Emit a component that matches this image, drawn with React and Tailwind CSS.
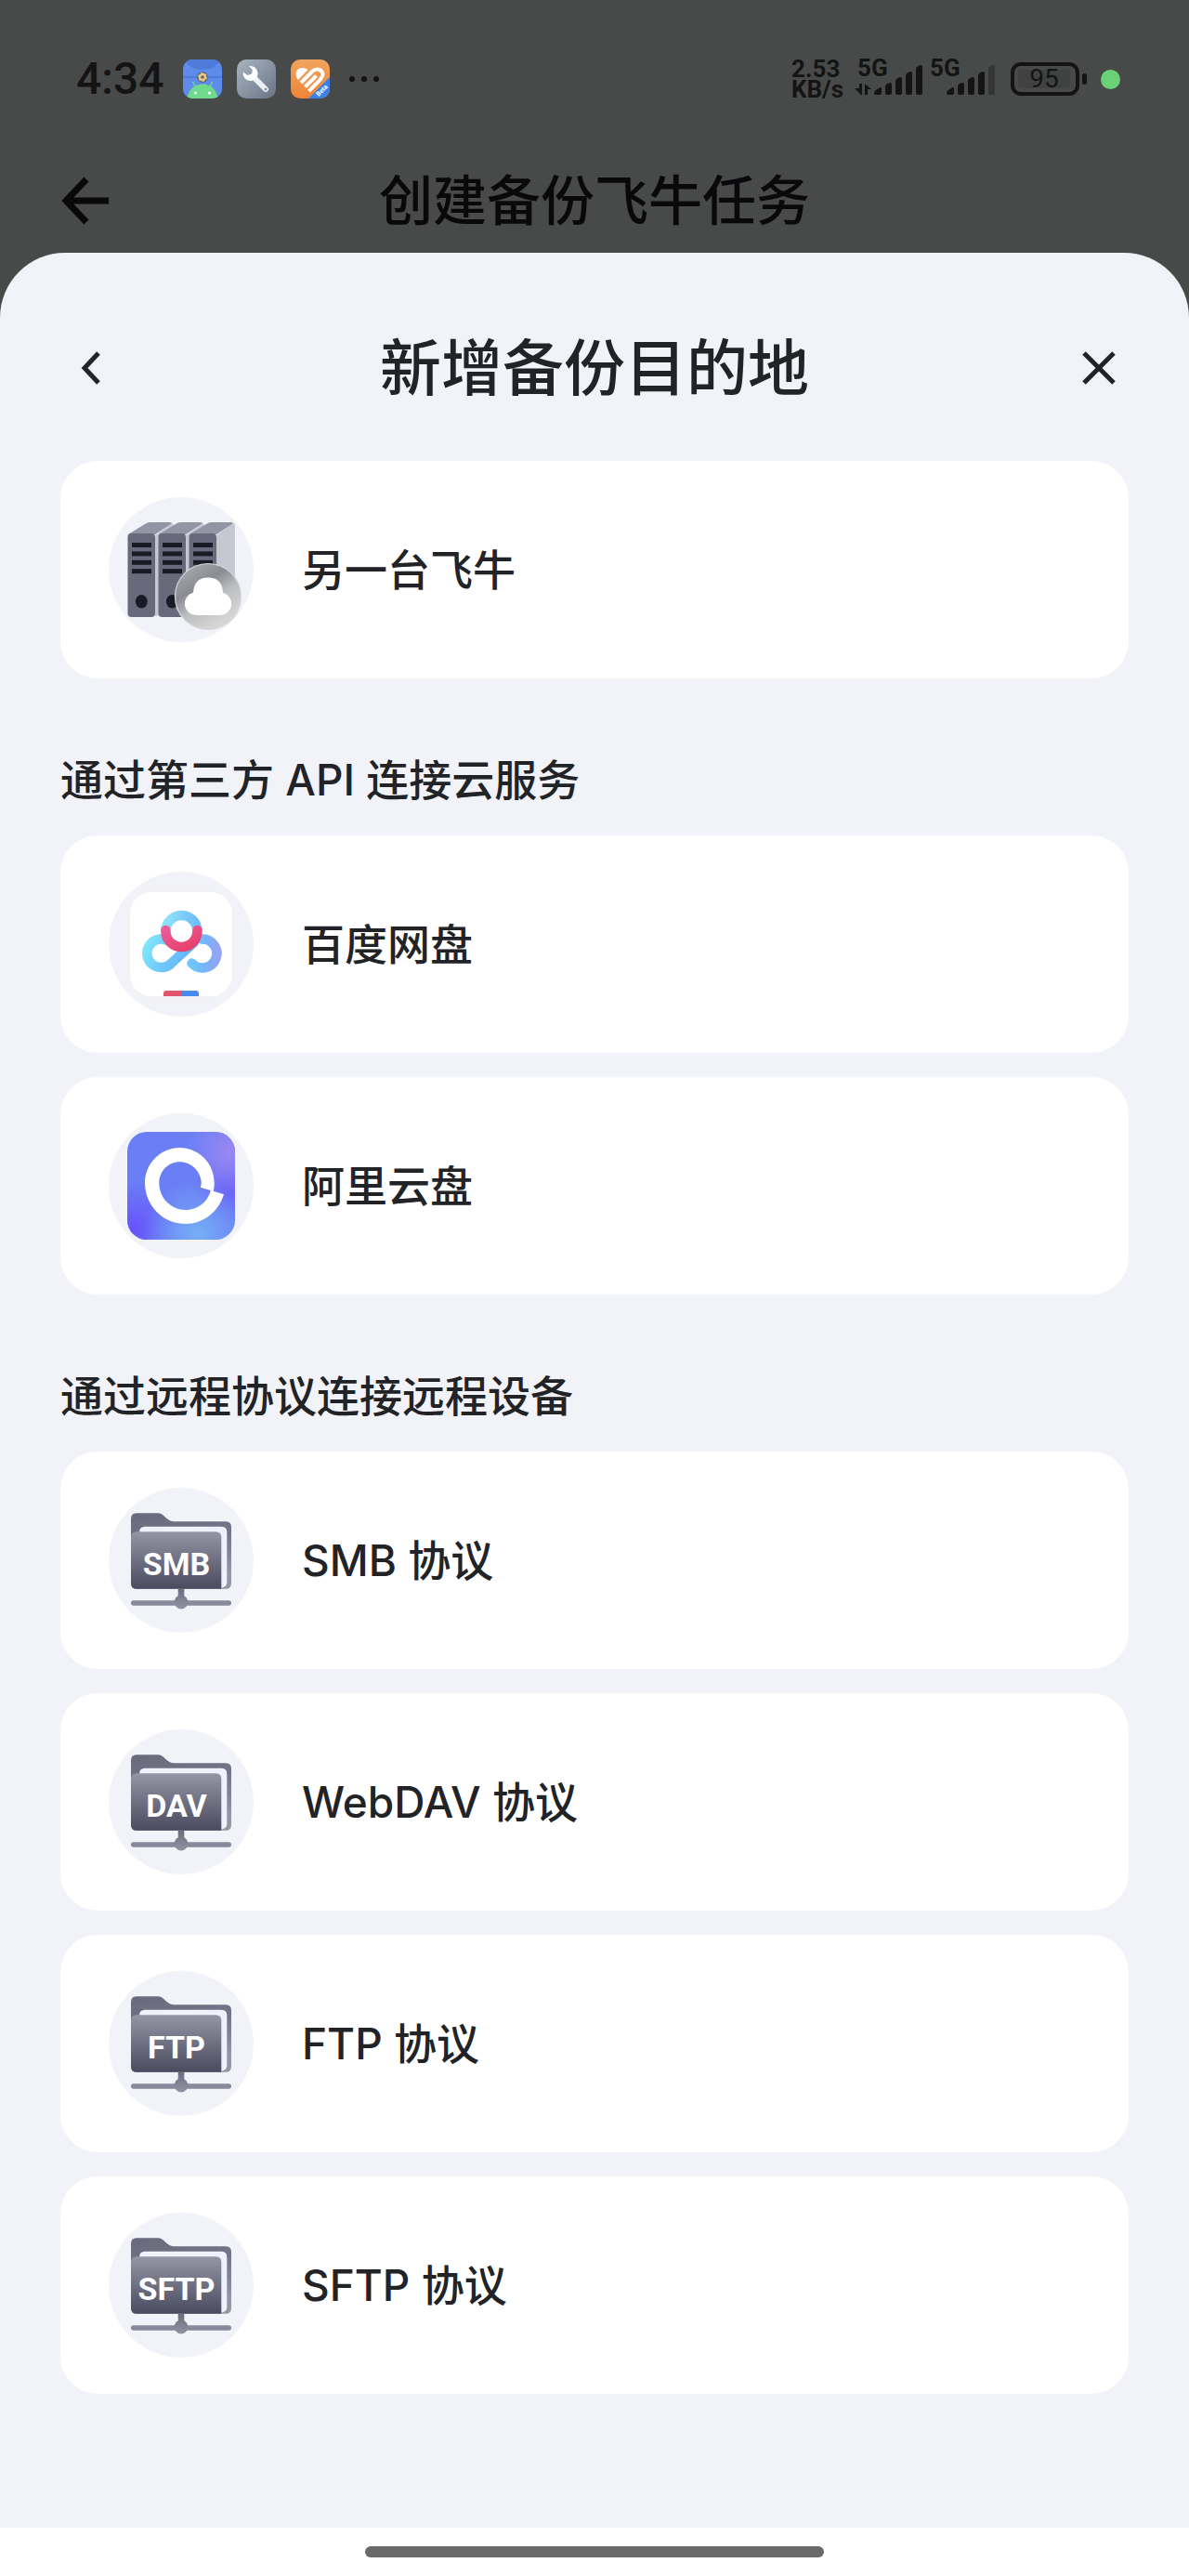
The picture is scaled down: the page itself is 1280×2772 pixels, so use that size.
import { useState } from "react";

const CLOUD_SERVICES = [
  { id: "baidu", name: "百度网盘", icon: <BaiduIcon /> },
  { id: "aliyun", name: "阿里云盘", icon: <AliyunIcon /> },
];

const PROTOCOLS = [
  { id: "smb", name: "SMB 协议", icon: <FolderIcon tag="SMB" /> },
  { id: "webdav", name: "WebDAV 协议", icon: <FolderIcon tag="DAV" /> },
  { id: "ftp", name: "FTP 协议", icon: <FolderIcon tag="FTP" /> },
  { id: "sftp", name: "SFTP 协议", icon: <FolderIcon tag="SFTP" /> },
];

// ── Destination icons, all drawn on the same 156px disc ──

function ServerIcon() {
  return (
    <svg width="156" height="156" viewBox="0 0 156 156" aria-hidden="true">
      <defs>
        <linearGradient id="badge" x1="0.2" y1="0.1" x2="0.7" y2="0.9">
          <stop offset="0" stopColor="#a2a3a9" />
          <stop offset="0.3" stopColor="#8b8c93" />
          <stop offset="0.6" stopColor="#bcbdbf" />
          <stop offset="1" stopColor="#d6d6d6" />
        </linearGradient>
      </defs>
      {[0, 33, 66].map((x) => (
        <g key={x} transform={`translate(${x} 0)`}>
          <path d="M50 41 67 29q3-2 3 2v90q0 3-3 4l-17 3z" fill="#c5c8d0" />
          <path d="M21 40 39 29q3-2 5-2h22q3 0 1 2L50 40z" fill="#9195a4" />
          <rect x="20.5" y="39" width="29.5" height="90" rx="4" fill="#686a7c" />
          {[49, 58.4, 67.8, 77.2].map((y) => (
            <rect key={y} x="25" y={y} width="21" height="5" fill="#191a26" />
          ))}
          <ellipse cx="35.3" cy="112.3" rx="6.4" ry="7.3" fill="#191a26" />
        </g>
      ))}
      <circle cx="107" cy="107" r="35.5" fill="url(#badge)" stroke="#d9dadd" strokeWidth="1.2" />
      <path d="M94 127a12.3 12.3 0 0 1-3-24.2q1-16.2 16-16.2t16 16.2a12.3 12.3 0 0 1-3 24.2z" fill="#fff" />
    </svg>
  );
}

function BaiduIcon() {
  return (
    <svg width="156" height="156" viewBox="0 0 156 156" aria-hidden="true">
      <defs>
        <linearGradient id="bd-top" x1="0" y1="0" x2="1" y2="0">
          <stop offset="0" stopColor="#8ce3f9" />
          <stop offset="1" stopColor="#6fbdfa" />
        </linearGradient>
        <linearGradient id="bd-left" gradientUnits="userSpaceOnUse" x1="36" y1="72" x2="90" y2="96">
          <stop offset="0" stopColor="#83ecf8" />
          <stop offset="0.5" stopColor="#70c9fb" />
          <stop offset="1" stopColor="#62b0f8" />
        </linearGradient>
        <linearGradient id="bd-right" gradientUnits="userSpaceOnUse" x1="84" y1="86" x2="120" y2="86">
          <stop offset="0" stopColor="#70cbfb" />
          <stop offset="0.5" stopColor="#74b6fa" />
          <stop offset="1" stopColor="#95a2f3" />
        </linearGradient>
        <linearGradient id="bd-red" x1="0" y1="0" x2="1" y2="1">
          <stop offset="0" stopColor="#ea5b98" />
          <stop offset="1" stopColor="#e83e68" />
        </linearGradient>
      </defs>
      <rect x="22" y="21" width="112" height="114" rx="24" fill="#fff" stroke="#f0f0f1" strokeWidth="1.5" />
      <g fill="none" strokeWidth="10.5" strokeLinecap="round">
        <path d="M89.500 98.500A15.500 15.500 0 1 0 100 72.500" stroke="url(#bd-right)" />
        <path d="M92 76 67.500 98.500A15.300 15.300 0 1 1 62 73.500" stroke="url(#bd-left)" />
        <path d="M61.400 64a17 17 0 0 1 34 0" stroke="url(#bd-top)" strokeLinecap="butt" />
        <path d="M61.400 63v1a17 17 0 0 0 34 0v-1" stroke="url(#bd-red)" />
      </g>
      <path d="M59 134v-3q0-3 3-3h16v6z" fill="#e4546f" />
      <path d="M78 134v-6h16q3 0 3 3v3z" fill="#478bf0" />
    </svg>
  );
}

function AliyunIcon() {
  return (
    <svg width="156" height="156" viewBox="0 0 156 156" aria-hidden="true">
      <defs>
        <radialGradient id="ali-pink" cx="0.95" cy="0.18" r="0.4">
          <stop offset="0" stopColor="#9b86f2" />
          <stop offset="1" stopColor="#9b86f2" stopOpacity="0" />
        </radialGradient>
        <radialGradient id="ali-sky" cx="0.65" cy="0.95" r="0.5">
          <stop offset="0" stopColor="#75aef6" />
          <stop offset="1" stopColor="#75aef6" stopOpacity="0" />
        </radialGradient>
        <radialGradient id="ali-violet" cx="0.05" cy="0.9" r="0.45">
          <stop offset="0" stopColor="#6853fa" />
          <stop offset="1" stopColor="#6853fa" stopOpacity="0" />
        </radialGradient>
        <radialGradient id="ali-indigo" cx="0.95" cy="0.55" r="0.35">
          <stop offset="0" stopColor="#6a62f6" />
          <stop offset="1" stopColor="#6a62f6" stopOpacity="0" />
        </radialGradient>
      </defs>
      <rect x="20" y="20" width="116" height="116" rx="21" fill="#6a7ff5" />
      <rect x="20" y="20" width="116" height="116" rx="21" fill="url(#ali-indigo)" />
      <rect x="20" y="20" width="116" height="116" rx="21" fill="url(#ali-pink)" />
      <rect x="20" y="20" width="116" height="116" rx="21" fill="url(#ali-violet)" />
      <rect x="20" y="20" width="116" height="116" rx="21" fill="url(#ali-sky)" />
      <path
        fillRule="evenodd"
        fill="#fff"
        d="M112.7 83.7 124 87.3C118 107 101 119 83 119 58 119 39 99 39 75 39 54 56 37 76.5 37 97 37 113.7 54 113.7 75c0 4-.3 6-1 8.700zM98.7 79.7 109.7 83C107 95 96 104 83 104 67 104 54.3 91 54.3 75c0-12.5 9.700-22.7 22.2-22.7S99.7 63 99.7 75c0 2-.4 3-1 4.700z"
      />
    </svg>
  );
}

function FolderIcon({ tag }) {
  return (
    <svg width="156" height="156" viewBox="0 0 156 156" aria-hidden="true">
      <defs>
        <linearGradient id={`back-${tag}`} x1="0" y1="0" x2="0.3" y2="1">
          <stop offset="0" stopColor="#686a7c" />
          <stop offset="0.5" stopColor="#747689" />
          <stop offset="1" stopColor="#9496a6" />
        </linearGradient>
        <linearGradient id={`front-${tag}`} x1="0" y1="0" x2="0" y2="1">
          <stop offset="0" stopColor="#9395a4" />
          <stop offset="1" stopColor="#4a4b5f" />
        </linearGradient>
        <linearGradient id={`stem-${tag}`} gradientUnits="userSpaceOnUse" x1="0" y1="108" x2="0" y2="131">
          <stop offset="0" stopColor="#6a6b7e" />
          <stop offset="1" stopColor="#9293a3" />
        </linearGradient>
      </defs>
      <path d="M30 27.3h23c3 0 4.500 1 6.500 3l3 2.800c3 2.400 5 3.200 8 3.200H126q6 0 6 6v60.4q0 6-6 6H30q-6 0-6-6V33.3q0-6 6-6z" fill={`url(#back-${tag})`} />
      <path d="M33 48q0-6.300 6-6.300h82.3q6 0 6 6V102q0 4-5 5.500H33z" fill="#eff1fd" />
      <path d="M30 47.3h85.3q6 0 6 6V108.7H30q-6 0-6-6V53.3q0-6 6-6z" fill={`url(#front-${tag})`} />
      <rect x="24" y="121.3" width="108" height="5.4" rx="2.7" fill="#88899a" />
      <path d="M74.7 108.7h6.600v7.500a7.500 7.500 0 1 1-6.600 0z" fill={`url(#stem-${tag})`} />
      <text x="73" y="94" textAnchor="middle" fill="#fff" className="font-['Roboto',sans-serif] text-[34px] font-bold">
        {tag}
      </text>
    </svg>
  );
}

// ── Status bar drawings ──

function ToolboxAppIcon() {
  return (
    <svg width="42" height="42" viewBox="0 0 42 42" aria-hidden="true">
      <defs>
        <clipPath id="app-clip">
          <rect width="42" height="42" rx="10" />
        </clipPath>
      </defs>
      <g clipPath="url(#app-clip)">
        <rect width="42" height="42" fill="#5d8cec" />
        <ellipse cx="21" cy="0" rx="18" ry="11" fill="#4f7cd8" />
        <path d="M0 19h42" stroke="#4f7cd8" strokeWidth="2" />
        <circle cx="21" cy="19" r="6" fill="#53698f" />
        <circle cx="21" cy="19" r="3" fill="none" stroke="#edc877" strokeWidth="2.4" />
        <circle cx="21" cy="19" r="4.2" fill="none" stroke="#edc877" strokeWidth="1.4" strokeDasharray="2.2" />
        <path d="m10.500 24 3 6M31.500 24l-3 6" stroke="#6fda8c" strokeWidth="1.5" />
        <path d="M4.500 43a16.500 16.500 0 0 1 33 0z" fill="#6fda8c" />
        <circle cx="13.5" cy="36" r="1.6" fill="#fff" />
        <circle cx="28.5" cy="36" r="1.6" fill="#fff" />
      </g>
    </svg>
  );
}

function WrenchAppIcon() {
  return (
    <svg width="42" height="42" viewBox="0 0 42 42" aria-hidden="true">
      <defs>
        <linearGradient id="wrench-bg" x1="0" y1="0" x2="1" y2="1">
          <stop offset="0" stopColor="#a9b4c1" />
          <stop offset="1" stopColor="#687484" />
        </linearGradient>
      </defs>
      <rect width="42" height="42" rx="10" fill="url(#wrench-bg)" />
      <path d="m17 18 14 14" stroke="#eceff3" strokeWidth="6" strokeLinecap="round" />
      <path d="M13 7.200a8 8 0 1 1-6.200 6.300l4.700 3.500 4.700-1.400.5-4.700z" fill="#fff" />
      <circle cx="31" cy="32" r="1.5" fill="#8793a1" />
    </svg>
  );
}

function HealthAppIcon() {
  return (
    <svg width="42" height="42" viewBox="0 0 42 42" aria-hidden="true">
      <defs>
        <linearGradient id="health-bg" x1="0" y1="0" x2="0" y2="1">
          <stop offset="0" stopColor="#f1a45e" />
          <stop offset="1" stopColor="#ee8536" />
        </linearGradient>
        <clipPath id="health-clip">
          <rect width="42" height="42" rx="10" />
        </clipPath>
      </defs>
      <g clipPath="url(#health-clip)">
        <rect width="42" height="42" fill="url(#health-bg)" />
        <path d="M8 22C3 16 6 9 12.500 9q3 0 6 2z" fill="#fff" />
        <path d="M11 25 23.500 12.500C28 8.500 34 11 34.500 15.500c.3 3.500-2 5.500-15 18.500M15.500 29.500l12-12" fill="none" stroke="#fff" strokeWidth="4" />
        <path d="M42 19v23H19z" fill="#3a80ea" />
        <text transform="translate(30 40) rotate(-45)" fill="#fff" className="font-['Roboto',sans-serif] text-[7px] font-bold">
          Beta
        </text>
      </g>
    </svg>
  );
}

function Signal({ data, faded }) {
  return (
    <svg className="overflow-visible" width="76" height="42" viewBox="0 0 76 42" fill="#141414" aria-hidden="true">
      <text x="3" y="18" className="font-['Roboto',sans-serif] text-[26px] font-bold">
        5G
      </text>
      {data && <path d="M5 26h3v12H7L0 31h5zM11 26l7 6h-4v6h-3z" />}
      <path d="M21 36q0-2 4-4.500t4-.5v5q0 2-2 2h-4q-2 0-2-2zM33 29q0-2 3.500-3.500T40 27v9q0 2-2 2h-3q-2 0-2-2zM44 23q0-2 3.500-3.500T51 21v15q0 2-2 2h-3q-2 0-2-2zM55 17q0-2 3.500-3.500T62 15v21q0 2-2 2h-3q-2 0-2-2z" />
      <path d="M66 10q0-2 3.500-3.500T73 8v28q0 2-2 2h-3q-2 0-2-2z" fill={faded ? "#353636" : "#141414"} />
    </svg>
  );
}

function StatusBar() {
  return (
    <div className="flex h-40 items-center pt-[10px] pr-[74px] pl-[82px] font-['Roboto',sans-serif] text-[#141414]">
      <span className="w-[115px] text-[48px] leading-[48px] font-medium">4:34</span>
      <div className="flex gap-4">
        <ToolboxAppIcon />
        <WrenchAppIcon />
        <HealthAppIcon />
      </div>
      <svg className="ml-5" width="34" height="8" viewBox="0 0 34 8" fill="#141414" aria-hidden="true">
        <circle cx="4" cy="4" r="3" />
        <circle cx="17" cy="4" r="3" />
        <circle cx="30" cy="4" r="3" />
      </svg>

      <div className="ml-auto flex items-center">
        <div className="w-[68px] text-[26px] leading-[22px] font-bold">
          <div>2.53</div>
          <div>KB/s</div>
        </div>
        <div className="flex gap-[2px]">
          <Signal data />
          <Signal faded />
        </div>
        <div className="ml-[14px] flex items-center gap-[3px]">
          <div className="h-9 w-[74px] rounded-[11px] border-4 border-[#141414] p-1">
            <div className="flex h-5 w-14 items-center justify-center rounded-sm bg-[#404141] text-[28px] leading-5">95</div>
          </div>
          <div className="h-3 w-[5px] rounded-full bg-[#141414]" />
        </div>
        <div className="ml-[15px] size-[21px] rounded-full bg-[#6bd177]" />
      </div>
    </div>
  );
}

function Destination({ name, icon, onClick }) {
  return (
    <li>
      <button type="button" onClick={onClick} className="flex w-full items-center gap-[52px] rounded-[40px] bg-white px-[52px] py-[39px] text-left">
        <span className="size-[156px] shrink-0 rounded-full bg-[#f2f3f9]">{icon}</span>
        <span className="text-[46px] leading-[60px] font-medium">{name}</span>
      </button>
    </li>
  );
}

function Section({ title, items, onSelect }) {
  return (
    <section>
      <h3 className="mt-[79px] mb-[30px] text-[46px] leading-[60px] font-medium">{title}</h3>
      <ul className="flex flex-col gap-[26px]">
        {items.map((item) => (
          <Destination key={item.id} name={item.name} icon={item.icon} onClick={() => onSelect(item.id)} />
        ))}
      </ul>
    </section>
  );
}

export default function App() {
  const [, setSelected] = useState(null);

  return (
    <div className="min-h-screen bg-[#484949] font-['Inter','Noto_Sans_CJK_SC',sans-serif] text-[#222327]">
      <StatusBar />

      {/* Dimmed page behind the sheet */}
      <header className="grid h-28 grid-cols-[1fr_auto_1fr] items-center px-16 text-[#09090b]">
        <button type="button" aria-label="返回" className="justify-self-start">
          <svg width="56" height="56" viewBox="0 0 56 56" fill="none" stroke="currentColor" strokeWidth="7">
            <path d="M29 5 7 28l22 23M6 28h47" />
          </svg>
        </button>
        <h1 className="text-[58px] leading-[64px] font-medium">创建备份飞牛任务</h1>
      </header>

      {/* Bottom sheet */}
      <main className="rounded-t-[70px] bg-[#f2f3f9] px-[65px] pb-36">
        <div className="grid h-56 grid-cols-[1fr_auto_1fr] items-center pt-6">
          <button type="button" aria-label="上一步" className="justify-self-start pl-2">
            <svg width="48" height="48" viewBox="0 0 48 48" fill="none" stroke="currentColor" strokeWidth="5">
              <path d="M33 8 18 24l15 16" />
            </svg>
          </button>
          <h2 className="text-[66px] leading-[72px] font-medium">新增备份目的地</h2>
          <button type="button" aria-label="关闭" className="justify-self-end pr-2">
            <svg width="48" height="48" viewBox="0 0 48 48" fill="none" stroke="currentColor" strokeWidth="5">
              <path d="m8 8 32 32M40 8 8 40" />
            </svg>
          </button>
        </div>

        <ul>
          <Destination name="另一台飞牛" icon={<ServerIcon />} onClick={() => setSelected("fnos")} />
        </ul>
        <Section title="通过第三方 API 连接云服务" items={CLOUD_SERVICES} onSelect={setSelected} />
        <Section title="通过远程协议连接远程设备" items={PROTOCOLS} onSelect={setSelected} />
      </main>

      {/* Gesture bar */}
      <footer className="flex h-[52px] justify-center bg-white pt-5">
        <div className="h-3 w-[494px] rounded-full bg-[#696969]" />
      </footer>
    </div>
  );
}
